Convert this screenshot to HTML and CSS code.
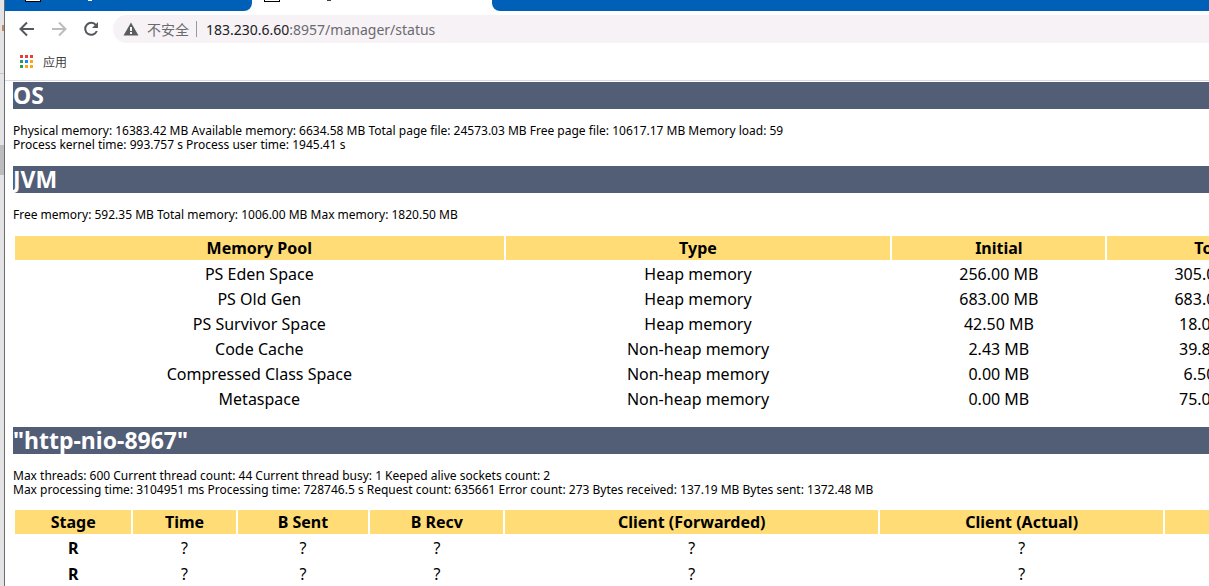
FILE: index.html
```html
<!DOCTYPE html>
<html lang="zh-CN">
<head>
<meta charset="utf-8">
<title>/manager/status</title>
<link rel="stylesheet" href="styles.css">
</head>
<body>
<div class="desktop"><span class="desktop-mark"></span><span class="desktop-rule"></span><span class="desktop-block"></span></div>
<div class="window">
  <div class="tabs">
    <div class="tab tab-left"><span class="favicon"></span><span class="title-tip"></span></div>
    <div class="tab tab-active"><span class="favicon"></span><span class="title-tip"></span></div>
    <div class="tab tab-right"></div>
  </div>
  <div class="toolbar">
    <button class="nav" aria-label="Back"><svg width="16" height="16" viewBox="0 0 16 16"><path d="M15 8H2M8 1.500L1.500 8L8 14.500" fill="none" stroke="#55585d" stroke-width="2"/></svg></button>
    <button class="nav" aria-label="Forward"><svg width="16" height="16" viewBox="0 0 16 16"><path d="M1 8H14M8 1.500L14.500 8L8 14.500" fill="none" stroke="#babcbe" stroke-width="2"/></svg></button>
    <button class="nav" aria-label="Reload"><svg width="16" height="16" viewBox="0 0 16 16"><path d="M13 4.200A6 6 0 1 0 13.800 10" fill="none" stroke="#55585d" stroke-width="2"/><path d="M15 1V7H9Z" fill="#55585d"/></svg></button>
    <div class="address">
      <svg width="16" height="14" viewBox="0 0 16 14"><path d="M8 0.500L15.500 13.500H0.500Z" fill="#5b5c60"/><path d="M8 5V9M8 10V12" stroke="#f6f2f6" stroke-width="2"/></svg>
      <span class="insecure">不安全</span>
      <span class="divider"></span>
      <span class="url"><b class="host">183.230.6.60</b>:8957/manager/status</span>
    </div>
  </div>
  <div class="bookmarks">
    <button class="apps">
      <svg width="13" height="13" viewBox="0 0 13 13"><path d="M0 0h3v3H0zM5 0h3v3H5zM10 0h3v3h-3z" fill="#f03a37"/><path d="M0 5h3v3H0zM0 10h3v3H0z" fill="#279d58"/><path d="M5 5h3v3H5z" fill="#1a83f7"/><path d="M10 5h3v3h-3zM5 10h3v3H5zM10 10h3v3h-3z" fill="#faa80c"/></svg>
      <span>应用</span>
    </button>
  </div>
  <main class="page">
    <h1>OS</h1>
    <p>Physical memory: 16383.42 MB Available memory: 6634.58 MB Total page file: 24573.03 MB Free page file: 10617.17 MB Memory load: 59<br>Process kernel time: 993.757 s Process user time: 1945.41 s</p>
    <h1>JVM</h1>
    <p>Free memory: 592.35 MB Total memory: 1006.00 MB Max memory: 1820.50 MB</p>
    <table class="memory">
      <colgroup><col class="m-pool"><col class="m-type"><col class="m-size"><col></colgroup>
      <thead><tr><th>Memory Pool</th><th>Type</th><th>Initial</th><th>Total</th></tr></thead>
      <tbody>
        <tr><td>PS Eden Space</td><td>Heap memory</td><td>256.00 MB</td><td>305.00 MB</td></tr>
        <tr><td>PS Old Gen</td><td>Heap memory</td><td>683.00 MB</td><td>683.00 MB</td></tr>
        <tr><td>PS Survivor Space</td><td>Heap memory</td><td>42.50 MB</td><td>18.00 MB</td></tr>
        <tr><td>Code Cache</td><td>Non-heap memory</td><td>2.43 MB</td><td>39.81 MB</td></tr>
        <tr><td>Compressed Class Space</td><td>Non-heap memory</td><td>0.00 MB</td><td>6.50 MB</td></tr>
        <tr><td>Metaspace</td><td>Non-heap memory</td><td>0.00 MB</td><td>75.00 MB</td></tr>
      </tbody>
    </table>
    <h1>"http-nio-8967"</h1>
    <p>Max threads: 600 Current thread count: 44 Current thread busy: 1 Keeped alive sockets count: 2<br>Max processing time: 3104951 ms Processing time: 728746.5 s Request count: 635661 Error count: 273 Bytes received: 137.19 MB Bytes sent: 1372.48 MB</p>
    <table class="requests">
      <colgroup><col class="r-stage"><col class="r-time"><col class="r-sent"><col class="r-recv"><col class="r-forwarded"><col class="r-actual"><col></colgroup>
      <thead><tr><th>Stage</th><th>Time</th><th>B Sent</th><th>B Recv</th><th>Client (Forwarded)</th><th>Client (Actual)</th><th></th></tr></thead>
      <tbody>
        <tr><td><b>R</b></td><td>?</td><td>?</td><td>?</td><td>?</td><td>?</td><td></td></tr>
        <tr><td><b>R</b></td><td>?</td><td>?</td><td>?</td><td>?</td><td>?</td><td></td></tr>
      </tbody>
    </table>
  </main>
</div>
</body>
</html>
```
FILE: styles.css
```css
* { box-sizing: border-box; }
body {
  margin: 0;
  height: 100vh;
  display: flex;
  overflow: hidden;
  background: #fff;
  color: #000;
  font-family: "Noto Sans", "Noto Sans CJK SC", sans-serif;
}
.desktop {
  flex: none;
  width: 5px;
  background: #e4e4e6;
  border-right: 1px solid #6c6c6e;
  display: flex;
  flex-direction: column;
}
.desktop-mark { width: 2px; height: 6px; margin: 25px 0 0 2px; background: #c08a62; }
.desktop-rule { height: 1px; margin-top: 42px; background: #c8c8ca; }
.desktop-block { height: 30px; margin-top: 71px; background: #bcbcbe; }
.window { flex: 1; min-width: 0; overflow: hidden; }
.tabs { display: flex; height: 11px; }
.tab { display: flex; align-items: flex-start; padding-left: 20px; }
.tab-left { width: 247px; background: #0060b8; border-bottom-right-radius: 8px; }
.tab-active { width: 240px; padding-left: 12px; }
.tab-right { flex: 1; background: #0060b8; border-bottom-left-radius: 8px; }
.favicon { width: 16px; height: 2px; background: #fff; border: 1px solid #000; border-top: 0; }
.title-tip { width: 4px; height: 1px; margin-left: 47px; background: #3c4043; }
.tab-left .title-tip { background: #fff; }
.toolbar { display: flex; align-items: center; height: 36px; padding-left: 6px; }
.nav {
  display: flex;
  align-items: center;
  justify-content: center;
  width: 32px;
  height: 28px;
  padding: 0;
  border: 0;
  background: none;
}
.address {
  flex: 1;
  display: flex;
  align-items: center;
  height: 28px;
  margin-left: 6px;
  padding-left: 10px;
  border-radius: 14px 0 0 14px;
  background: #f6f2f6;
  color: #6a6a6e;
  font-size: 14px;
  white-space: nowrap;
}
.insecure { margin-left: 8px; }
.divider { width: 1px; height: 16px; margin: 0 9px 0 7px; background: #9a9a9e; }
.host { font-weight: 400; color: #202124; }
.bookmarks { display: flex; align-items: center; height: 34px; padding: 0 0 4px 15px; border-bottom: 1px solid #dcd9e4; }
.apps {
  display: flex;
  align-items: center;
  gap: 10px;
  padding: 0;
  border: 0;
  background: none;
  color: #3c4043;
  font: 12px "Noto Sans CJK SC", sans-serif;
}
.page { padding: 1px 0 0 8px; white-space: nowrap; }
h1 { margin: 0 0 15px; background: #525d76; color: #fff; font-size: 23px; line-height: 27px; }
p { margin: 0 0 14px; font-size: 12px; line-height: 14px; }
p:has(+ table) { margin-bottom: 11px; }
table { width: 109.5%; table-layout: fixed; border-spacing: 2px; font-size: 16px; line-height: 23px; text-align: center; }
th, td { padding: 0; }
th { height: 24px; background: #ffdc75; }
.memory { margin: 12px 0 15px; }
.memory td { padding-top: 2px; line-height: 21px; }
.m-pool { width: 37.6%; }
.m-type { width: 29.6%; }
.m-size { width: 16.4%; }
.requests td { height: 24px; }
.r-stage { width: 9%; }
.r-time { width: 7.9%; }
.r-sent { width: 10.1%; }
.r-recv { width: 10.3%; }
.r-forwarded { width: 28.8%; }
.r-actual { width: 21.9%; }
```
